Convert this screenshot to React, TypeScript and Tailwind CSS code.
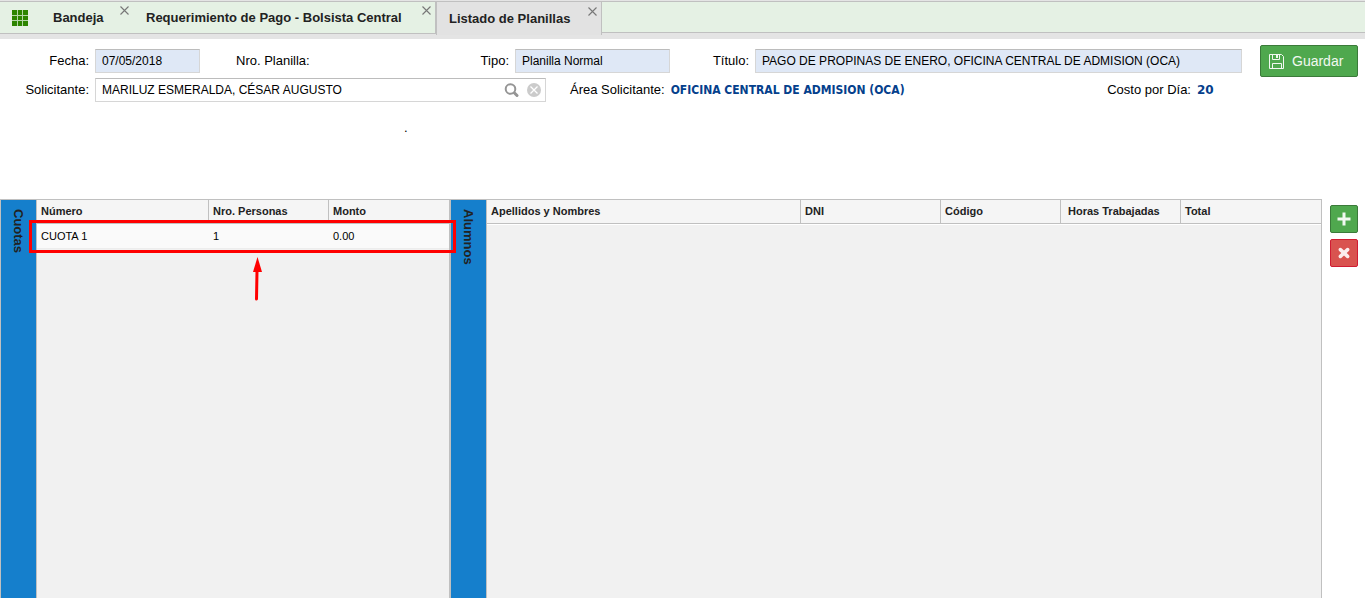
import React from 'react';

interface FieldProps {
  id: string;
  label: string;
  value: string;
  labelClass: string;
  inputClass: string;
}

interface Column {
  name: string;
  className: string;
}

const cuotaColumns: Column[] = [
  { name: 'Número', className: 'w-[172px]' },
  { name: 'Nro. Personas', className: 'w-[120px]' },
  { name: 'Monto', className: '' },
];

const alumnoColumns: Column[] = [
  { name: 'Apellidos y Nombres', className: 'px-1' },
  { name: 'DNI', className: 'w-[140px] px-1' },
  { name: 'Código', className: 'w-[120px] px-1' },
  { name: 'Horas Trabajadas', className: 'w-[120px] pl-[7px]' },
  { name: 'Total', className: 'w-[140px] px-1' },
];

const cuotas = [{ numero: 'CUOTA 1', personas: '1', monto: '0.00' }];

const MenuIcon = () => (
  <svg className="w-4 h-4" viewBox="0 0 16 16">
    <rect width="16" height="16" fill="#2d8500" />
    <path d="M5.5 0 V16 M10.5 0 V16 M0 5.5 H16 M0 10.5 H16" stroke="#b5d7a9" strokeWidth="1" />
  </svg>
);

const CloseIcon = () => (
  <svg className="w-[9px] h-[9px]" viewBox="0 0 9 9" stroke="#777" strokeWidth="1.1" fill="none">
    <path d="M0.5 0.5 L8.5 8.5 M8.5 0.5 L0.5 8.5" />
  </svg>
);

const SearchIcon = () => (
  <svg className="w-[15px] h-4" viewBox="0 0 15 16" fill="none" stroke="#959595">
    <circle cx="6.5" cy="7" r="4.8" strokeWidth="2" />
    <path d="M10.5 11 L13 13.5" strokeWidth="3" strokeLinecap="round" />
  </svg>
);

const ClearIcon = () => (
  <svg className="w-[14px] h-[14px]" viewBox="0 0 14 14" fill="none">
    <circle cx="7" cy="7" r="7" fill="#cbcbcb" />
    <path d="M3.5 3.5 L10.5 10.5 M10.5 3.5 L3.5 10.5" stroke="#fff" strokeWidth="1.3" />
  </svg>
);

const SaveIcon = () => (
  <svg className="w-[15px] h-[15px]" viewBox="0 0 15 15" fill="none" stroke="#f1f8f1" strokeWidth="1">
    <path d="M0.5 0.5 H12.5 L14.5 2.5 V14.5 H0.5 Z" />
    <path d="M3.5 0.5 V5.5 H10.5 V0.5" />
    <path d="M8 1 V4" strokeWidth="2" />
    <path d="M3.5 14.5 V9.5 H12.5 V14.5" />
  </svg>
);

const PlusIcon = () => (
  <svg className="w-[14px] h-[14px]" viewBox="0 0 14 14" fill="none" stroke="#f1f8f1" strokeWidth="3">
    <path d="M7 0.5 V13.5 M0.5 7 H13.5" />
  </svg>
);

const RemoveIcon = () => (
  <svg className="w-3 h-3" viewBox="0 0 12 12" fill="none" stroke="#fbeeee" strokeWidth="3.6" strokeLinecap="round">
    <path d="M2.4 2.6 L9.6 9.4 M9.6 2.6 L2.4 9.4" />
  </svg>
);

const Field: React.FC<FieldProps> = ({ id, label, value, labelClass, inputClass }) => (
  <>
    <label htmlFor={id} className={`shrink-0 text-right text-[13px] ${labelClass}`}>{label}</label>
    <input
      id={id}
      readOnly
      defaultValue={value}
      className={`h-6 ml-[6px] px-[6px] min-w-0 text-xs bg-[#dfe8f6] border border-[#d6d6d6] border-t-[#bcbcbc] outline-none ${inputClass}`}
    />
  </>
);

const Tab: React.FC<{ title: string; active?: boolean; className: string }> = ({ title, active, className }) => (
  <div
    className={`relative flex items-center shrink-0 border-[#c0c0c0] ${className} ${
      active ? 'h-[33px] bg-[#e2e2e2] border-x' : 'h-8 bg-[#e5f1e4] border-b'
    }`}
  >
    <button className="pt-px font-bold text-[13px] text-[#222] whitespace-nowrap">{title}</button>
    <button aria-label={`Cerrar ${title}`} className={`absolute right-1 ${active ? 'top-[5px]' : 'top-1'}`}>
      <CloseIcon />
    </button>
  </div>
);

const Header: React.FC<{ columns: Column[] }> = ({ columns }) => (
  <thead>
    <tr className="h-6 bg-[#f5f5f5]">
      {columns.map((col, i) => (
        <th
          key={col.name}
          className={`text-left text-[11px] font-bold text-[#222] border-b border-[#c0c0c0] ${
            i < columns.length - 1 ? 'border-r' : ''
          } ${col.className || ''} pl-1`}
        >
          {col.name}
        </th>
      ))}
    </tr>
  </thead>
);

const SideTitle: React.FC<{ title: string }> = ({ title }) => (
  <h2 className="w-9 shrink-0 flex items-center pt-[9px] bg-[#157fcc] border-r border-[#c0c0c0] text-[13px] font-bold text-[#222] [writing-mode:vertical-rl]">
    {title}
  </h2>
);

export default function App() {
  return (
    <div className="min-h-screen flex flex-col bg-white text-black font-['Liberation_Sans',sans-serif]">
      <nav className="h-[39px] pt-px bg-[#e4e4e4]">
        <div className="flex h-8 bg-[#e5f1e4] border-t border-b border-[#c0c0c0]">
          <button aria-label="Menú" className="w-10 h-8 pl-3 bg-[#e5f1e4] border-b border-[#c0c0c0]">
            <MenuIcon />
          </button>
          <Tab title="Bandeja" className="w-[93px] pl-[13px]" />
          <Tab title="Requerimiento de Pago - Bolsista Central" className="w-[303px] pl-[13px] border-r" />
          <Tab title="Listado de Planillas" active className="w-[166px] pl-3" />
        </div>
      </nav>

      <form className="h-[160px] shrink-0 flex items-start pt-[6px] pr-[7px]" onSubmit={e => e.preventDefault()}>
        <div className="flex-1 min-w-0 pt-1">
          <div className="flex items-center h-6">
            <Field id="fecha" label="Fecha:" value="07/05/2018" labelClass="w-[89px]" inputClass="w-[105px]" />
            <span className="ml-9 w-[200px] shrink-0 text-[13px]">Nro. Planilla:</span>
            <Field id="tipo" label="Tipo:" value="Planilla Normal" labelClass="w-[73px]" inputClass="w-[155px]" />
            <Field
              id="titulo"
              label="Título:"
              value="PAGO DE PROPINAS DE ENERO, OFICINA CENTRAL DE ADMISION (OCA)"
              labelClass="w-[79px]"
              inputClass="flex-1"
            />
          </div>
          <div className="flex items-center h-6 mt-[5px]">
            <label htmlFor="solicitante" className="w-[89px] shrink-0 text-right text-[13px]">Solicitante:</label>
            <div className="flex items-center gap-2 w-[451px] h-6 ml-[6px] pl-[6px] pr-1 border border-[#d6d6d6] border-t-[#bcbcbc]">
              <input
                id="solicitante"
                defaultValue="MARILUZ ESMERALDA, CÉSAR AUGUSTO"
                className="flex-1 min-w-0 text-xs outline-none"
              />
              <button type="button" aria-label="Buscar"><SearchIcon /></button>
              <button type="button" aria-label="Limpiar"><ClearIcon /></button>
            </div>
            <span className="ml-6 text-[13px]">Área Solicitante:</span>
            <b className="ml-[6px] text-xs text-[#04408c] font-['DejaVu_Sans_Condensed','DejaVu_Sans',sans-serif]">
              OFICINA CENTRAL DE ADMISION (OCA)
            </b>
            <span className="ml-auto text-[13px]">Costo por Día:</span>
            <b className="ml-[6px] w-[45px] text-xs text-[#04408c] font-['DejaVu_Sans',sans-serif]">20</b>
          </div>
          <p className="mt-4 pl-[404px] text-[13px]">.</p>
        </div>
        <button
          type="submit"
          className="flex items-center gap-2 w-[98px] h-8 ml-[18px] pl-2 rounded-xs bg-[#4fa84e] border border-[#3b7a3a] text-sm text-[#f1f8f1]"
        >
          <SaveIcon />
          Guardar
        </button>
      </form>

      <main className="flex-1 flex">
        <section className="relative flex w-[450px] shrink-0 border border-b-0 border-[#c0c0c0] bg-[#f1f1f1]">
          <SideTitle title="Cuotas" />
          <div className="flex-1">
            <table className="w-full table-fixed border-separate border-spacing-0">
              <Header columns={cuotaColumns} />
              <tbody>
                {cuotas.map(row => (
                  <tr key={row.numero} className="h-[25px] bg-[#fafafa] text-[11px]">
                    <td className="px-1 border-b border-[#ededed]">{row.numero}</td>
                    <td className="px-1 border-b border-[#ededed]">{row.personas}</td>
                    <td className="px-1 border-b border-[#ededed]">{row.monto}</td>
                  </tr>
                ))}
              </tbody>
            </table>
          </div>
          {/* Highlight around the first cuota, with its arrow */}
          <div className="absolute z-10 left-[28px] top-5 w-[427px] h-[33px] border-3 border-[#f00] pointer-events-none" />
          <svg className="absolute z-10 left-[250px] top-[57px] w-3 h-11" viewBox="0 0 12 44">
            <path d="M6.5 0 L11 15 H2 Z" fill="#f00" />
            <path d="M6 14 L5.5 42" stroke="#f00" strokeWidth="3" strokeLinecap="round" />
          </svg>
        </section>

        <section className="flex flex-1 min-w-0 border border-b-0 border-[#c0c0c0] bg-[#f1f1f1]">
          <SideTitle title="Alumnos" />
          <div className="flex-1">
            <table className="w-full table-fixed border-separate border-spacing-0 border-b border-white">
              <Header columns={alumnoColumns} />
            </table>
          </div>
        </section>

        <div className="w-[43px] shrink-0 flex flex-col gap-[6px] pt-[6px] pl-2">
          <button
            aria-label="Agregar"
            className="flex items-center justify-center w-7 h-7 rounded-xs bg-[#4fa84e] border border-[#3b7a3a]"
          >
            <PlusIcon />
          </button>
          <button
            aria-label="Eliminar"
            className="flex items-center justify-center w-7 h-7 rounded-xs bg-[#d9534f] border border-[#d01c33]"
          >
            <RemoveIcon />
          </button>
        </div>
      </main>
    </div>
  );
}
